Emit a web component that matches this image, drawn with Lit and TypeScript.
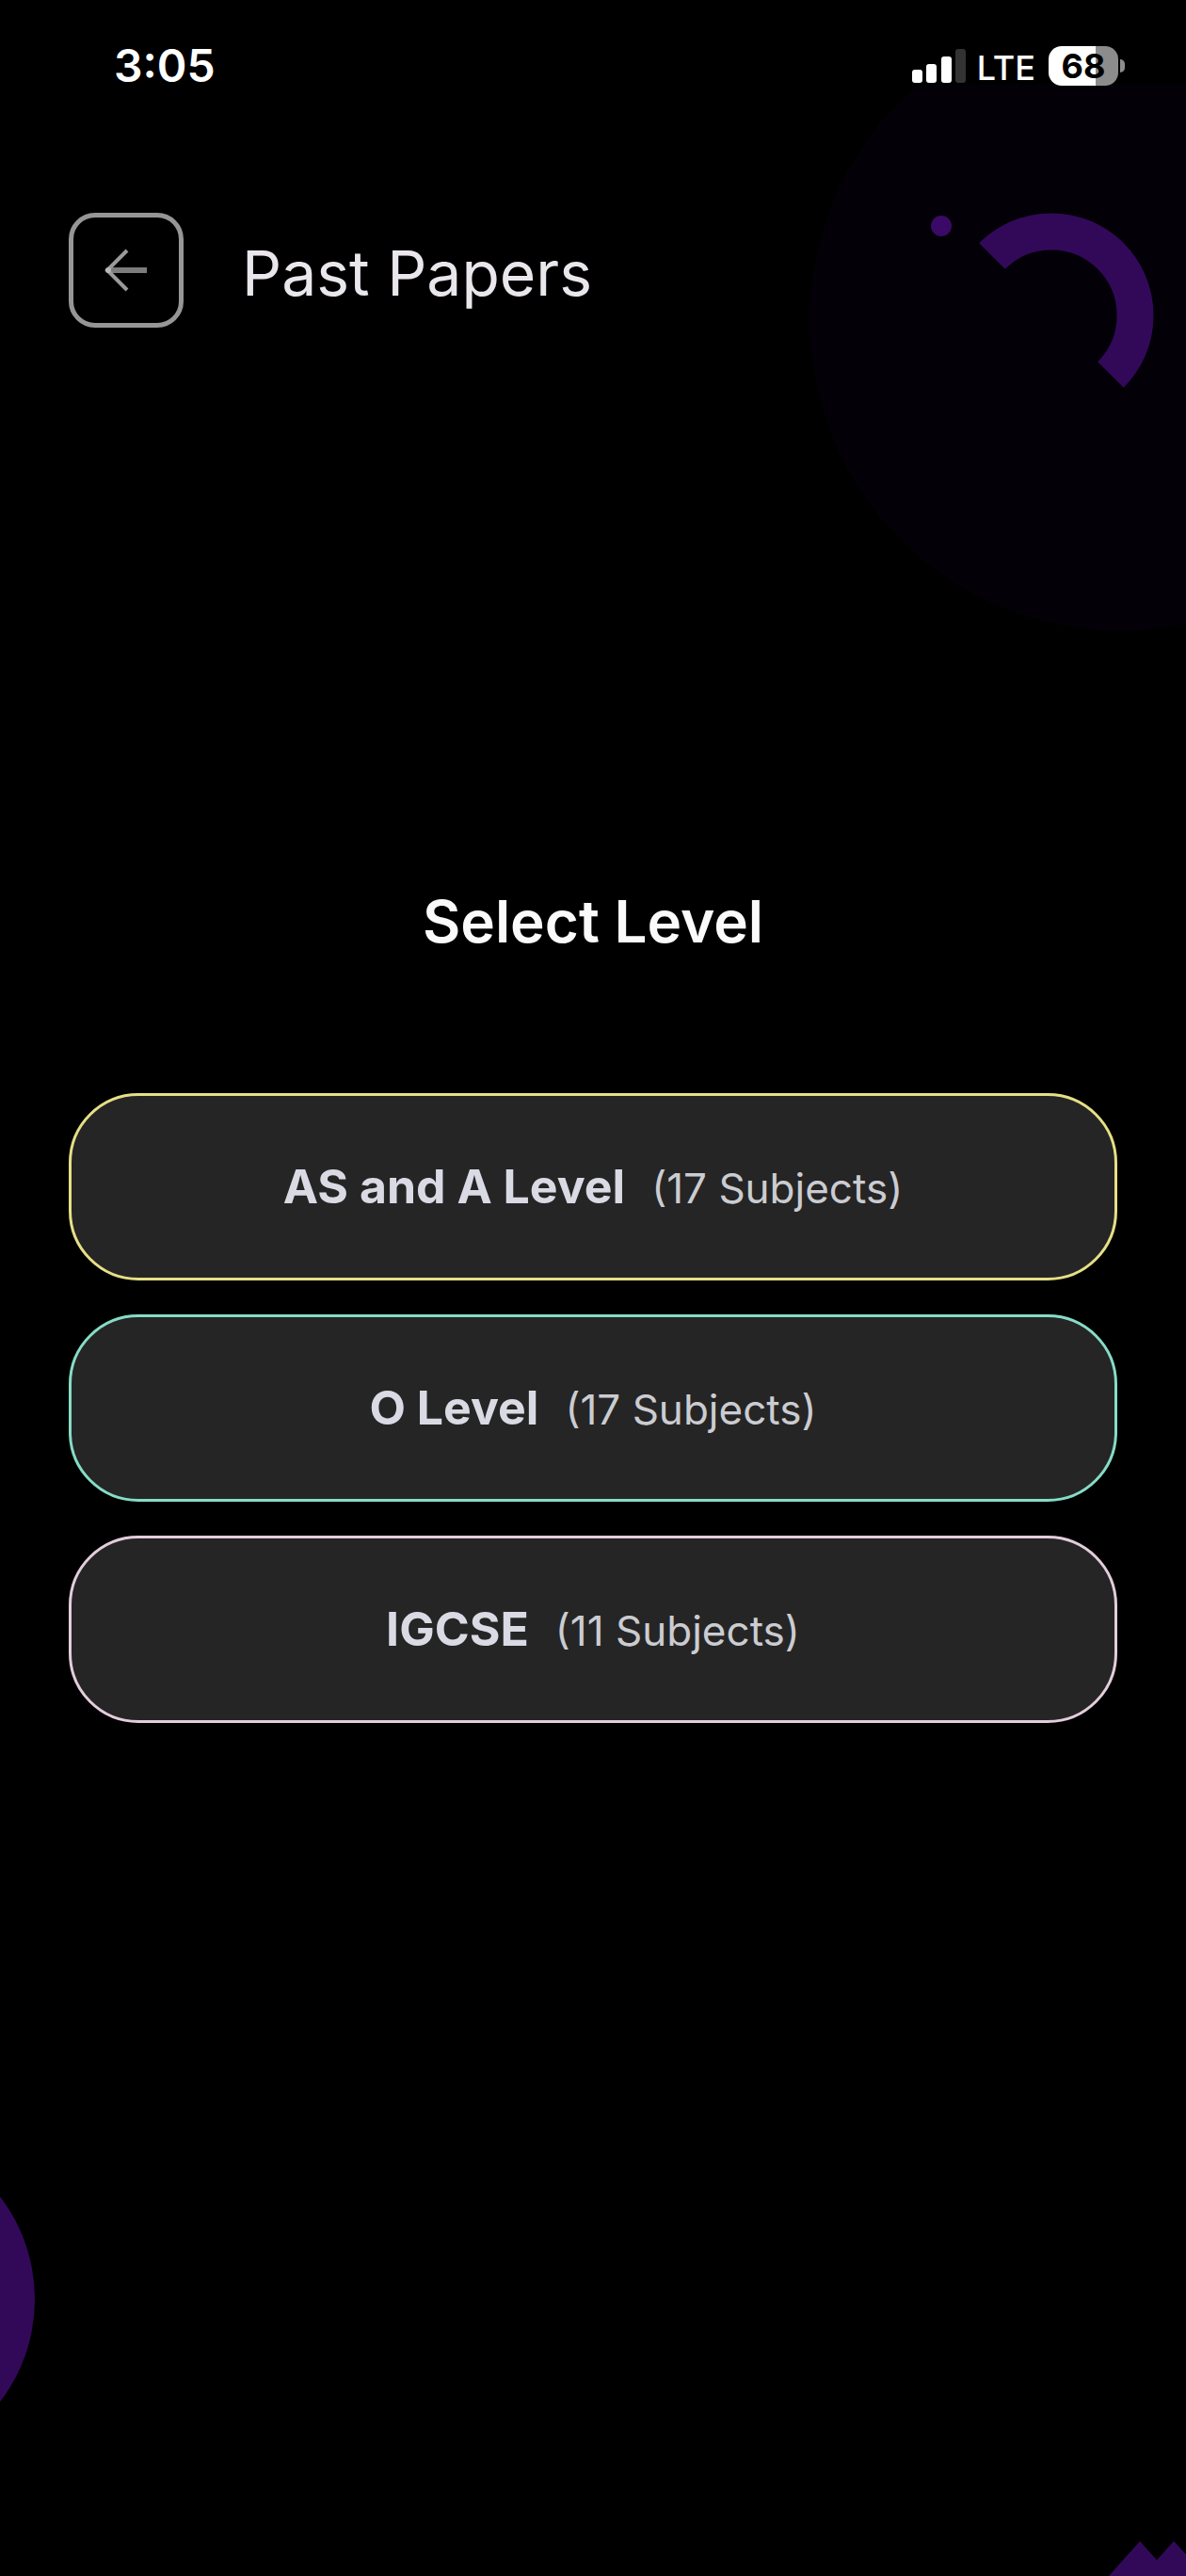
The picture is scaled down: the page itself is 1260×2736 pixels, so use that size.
import { LitElement, html, css, svg } from "lit";
import { customElement, property } from "lit/decorators.js";

type Tone = "yellow" | "teal" | "pink";

interface Level {
  name: string;
  subjects: number;
  tone: Tone;
}

const LEVELS: Level[] = [
  { name: "AS and A Level", subjects: 17, tone: "yellow" },
  { name: "O Level", subjects: 17, tone: "teal" },
  { name: "IGCSE", subjects: 11, tone: "pink" },
];

/* Signal bars: x, top and fill; every bar ends on the same base line. */
const BARS = [
  { x: 0, y: 22, fill: "#ffffff" },
  { x: 15, y: 16, fill: "#ffffff" },
  { x: 31, y: 8, fill: "#ffffff" },
  { x: 46, y: 0, fill: "#333333" },
];

@customElement("status-bar")
class StatusBar extends LitElement {
  static styles = css`
    :host {
      display: flex;
      align-items: center;
      justify-content: space-between;
      height: 60px;
      padding: 0 65px 0 121px;
      color: #ffffff;
    }
    .time {
      font-size: 48px;
      line-height: 60px;
      font-weight: 600;
    }
    .icons {
      display: flex;
      align-items: center;
    }
    .bars {
      display: block;
      margin-right: 12px;
    }
    .network {
      font-size: 36px;
      line-height: 60px;
      font-weight: 500;
      margin: 4px 14px 0 0;
    }
    .battery {
      display: flex;
      align-items: center;
    }
    .charge {
      width: 74px;
      height: 42px;
      border-radius: 14px;
      background: linear-gradient(to right, #ffffff 68%, #8c8c8c 68%);
      color: #000000;
      font-size: 36px;
      line-height: 42px;
      font-weight: 700;
      text-align: center;
    }
    .cap {
      width: 5px;
      height: 14px;
      margin-left: 2px;
      border-radius: 0 7px 7px 0;
      background: #8c8c8c;
    }
  `;

  render() {
    return html`
      <span class="time">3:05</span>
      <div class="icons">
        <svg class="bars" width="57" height="36" viewBox="0 0 57 36" aria-hidden="true">
          ${BARS.map(
            (b) => svg`<rect x=${b.x} y=${b.y} width="11" height=${36 - b.y} rx="3" fill=${b.fill} />`
          )}
        </svg>
        <span class="network">LTE</span>
        <div class="battery">
          <div class="charge">68</div>
          <div class="cap"></div>
        </div>
      </div>
    `;
  }
}

@customElement("level-card")
class LevelCard extends LitElement {
  @property() name = "";
  @property({ type: Number }) subjects = 0;
  @property() tone: Tone = "yellow";

  static styles = css`
    :host {
      display: block;
    }
    .card {
      display: flex;
      align-items: center;
      justify-content: center;
      box-sizing: border-box;
      width: 100%;
      min-height: 199px;
      padding: 24px;
      border: 3px solid;
      border-radius: 74px;
      background: #252525;
      font-family: inherit;
      cursor: pointer;
    }
    .yellow {
      border-color: #e6df86;
    }
    .teal {
      border-color: #86dcc6;
    }
    .pink {
      border-color: #e3cddb;
    }
    .label {
      display: flex;
      flex-wrap: wrap;
      align-items: baseline;
      justify-content: center;
      column-gap: 28px;
      line-height: 60px;
    }
    .name {
      color: #d9dae3;
      font-size: 50px;
      font-weight: 700;
    }
    .count {
      color: #cbccd1;
      font-size: 44px;
      font-weight: 400;
    }
  `;

  render() {
    return html`
      <button class="card ${this.tone}" type="button">
        <span class="label">
          <span class="name">${this.name}</span>
          <span class="count">(${this.subjects} Subjects)</span>
        </span>
      </button>
    `;
  }
}

@customElement("app-root")
class AppRoot extends LitElement {
  static styles = css`
    :host {
      display: block;
      position: relative;
      box-sizing: border-box;
      min-height: 100vh;
      overflow: hidden;
      padding-top: 40px;
      background: #000000;
      font-family: Inter, "Liberation Sans", sans-serif;
    }
    .decor {
      position: absolute;
      display: block;
    }
    .orbit {
      top: 90px;
      right: 0;
    }
    .disc {
      left: 0;
      bottom: 164px;
    }
    .peaks {
      right: 0;
      bottom: 0;
    }
    .content {
      position: relative;
    }
    .header {
      display: flex;
      align-items: flex-start;
      gap: 62px;
      padding: 126px 73px 0;
    }
    .back {
      display: flex;
      flex: none;
      align-items: center;
      justify-content: center;
      box-sizing: border-box;
      width: 122px;
      height: 122px;
      padding: 0;
      border: 5px solid #969696;
      border-radius: 28px;
      background: transparent;
      cursor: pointer;
    }
    .title {
      margin: 0;
      color: #e9e6ec;
      font-size: 66px;
      line-height: 128px;
      font-weight: 400;
    }
    .levels {
      padding: 589px 73px 0;
    }
    .heading {
      margin: 0 0 146px;
      color: #fafafa;
      font-size: 62px;
      line-height: 72px;
      font-weight: 600;
      text-align: center;
    }
    .list {
      display: grid;
      gap: 36px;
      margin: 0;
      padding: 0;
      list-style: none;
    }
  `;

  render() {
    return html`
      <svg class="decor orbit" width="400" height="580" viewBox="860 90 400 580" aria-hidden="true">
        <circle cx="1190" cy="340" r="330" fill="#030007" />
        <circle cx="1000" cy="240" r="11" fill="#3a0a66" />
        <path d="M1054 272A89 89 0 0 1 1180 398" fill="none" stroke="#320959" stroke-width="39" />
      </svg>
      <svg class="decor disc" width="40" height="260" viewBox="0 0 40 260" aria-hidden="true">
        <circle cx="-142" cy="130" r="179" fill="#320959" />
      </svg>
      <svg class="decor peaks" width="84" height="38" viewBox="0 0 84 38" aria-hidden="true">
        <path d="M2 38L35 1L53 21L71 1L84 15V38Z" fill="#320959" />
      </svg>

      <div class="content">
        <status-bar></status-bar>
        <header class="header">
          <button class="back" type="button" aria-label="Back">
            <svg width="48" height="48" viewBox="0 0 48 48" fill="none" aria-hidden="true">
              <path d="M4 24H46" stroke="#7c7c7c" stroke-width="6" />
              <path d="M25 3L4 24L25 45" stroke="#9a9a9a" stroke-width="4" />
              <circle cx="5" cy="24" r="3" fill="#b8b8b8" />
            </svg>
          </button>
          <h1 class="title">Past Papers</h1>
        </header>
        <main class="levels">
          <h2 class="heading">Select Level</h2>
          <ul class="list">
            ${LEVELS.map(
              (l) => html`<li>
                <level-card .name=${l.name} .subjects=${l.subjects} .tone=${l.tone}></level-card>
              </li>`
            )}
          </ul>
        </main>
      </div>
    `;
  }
}
